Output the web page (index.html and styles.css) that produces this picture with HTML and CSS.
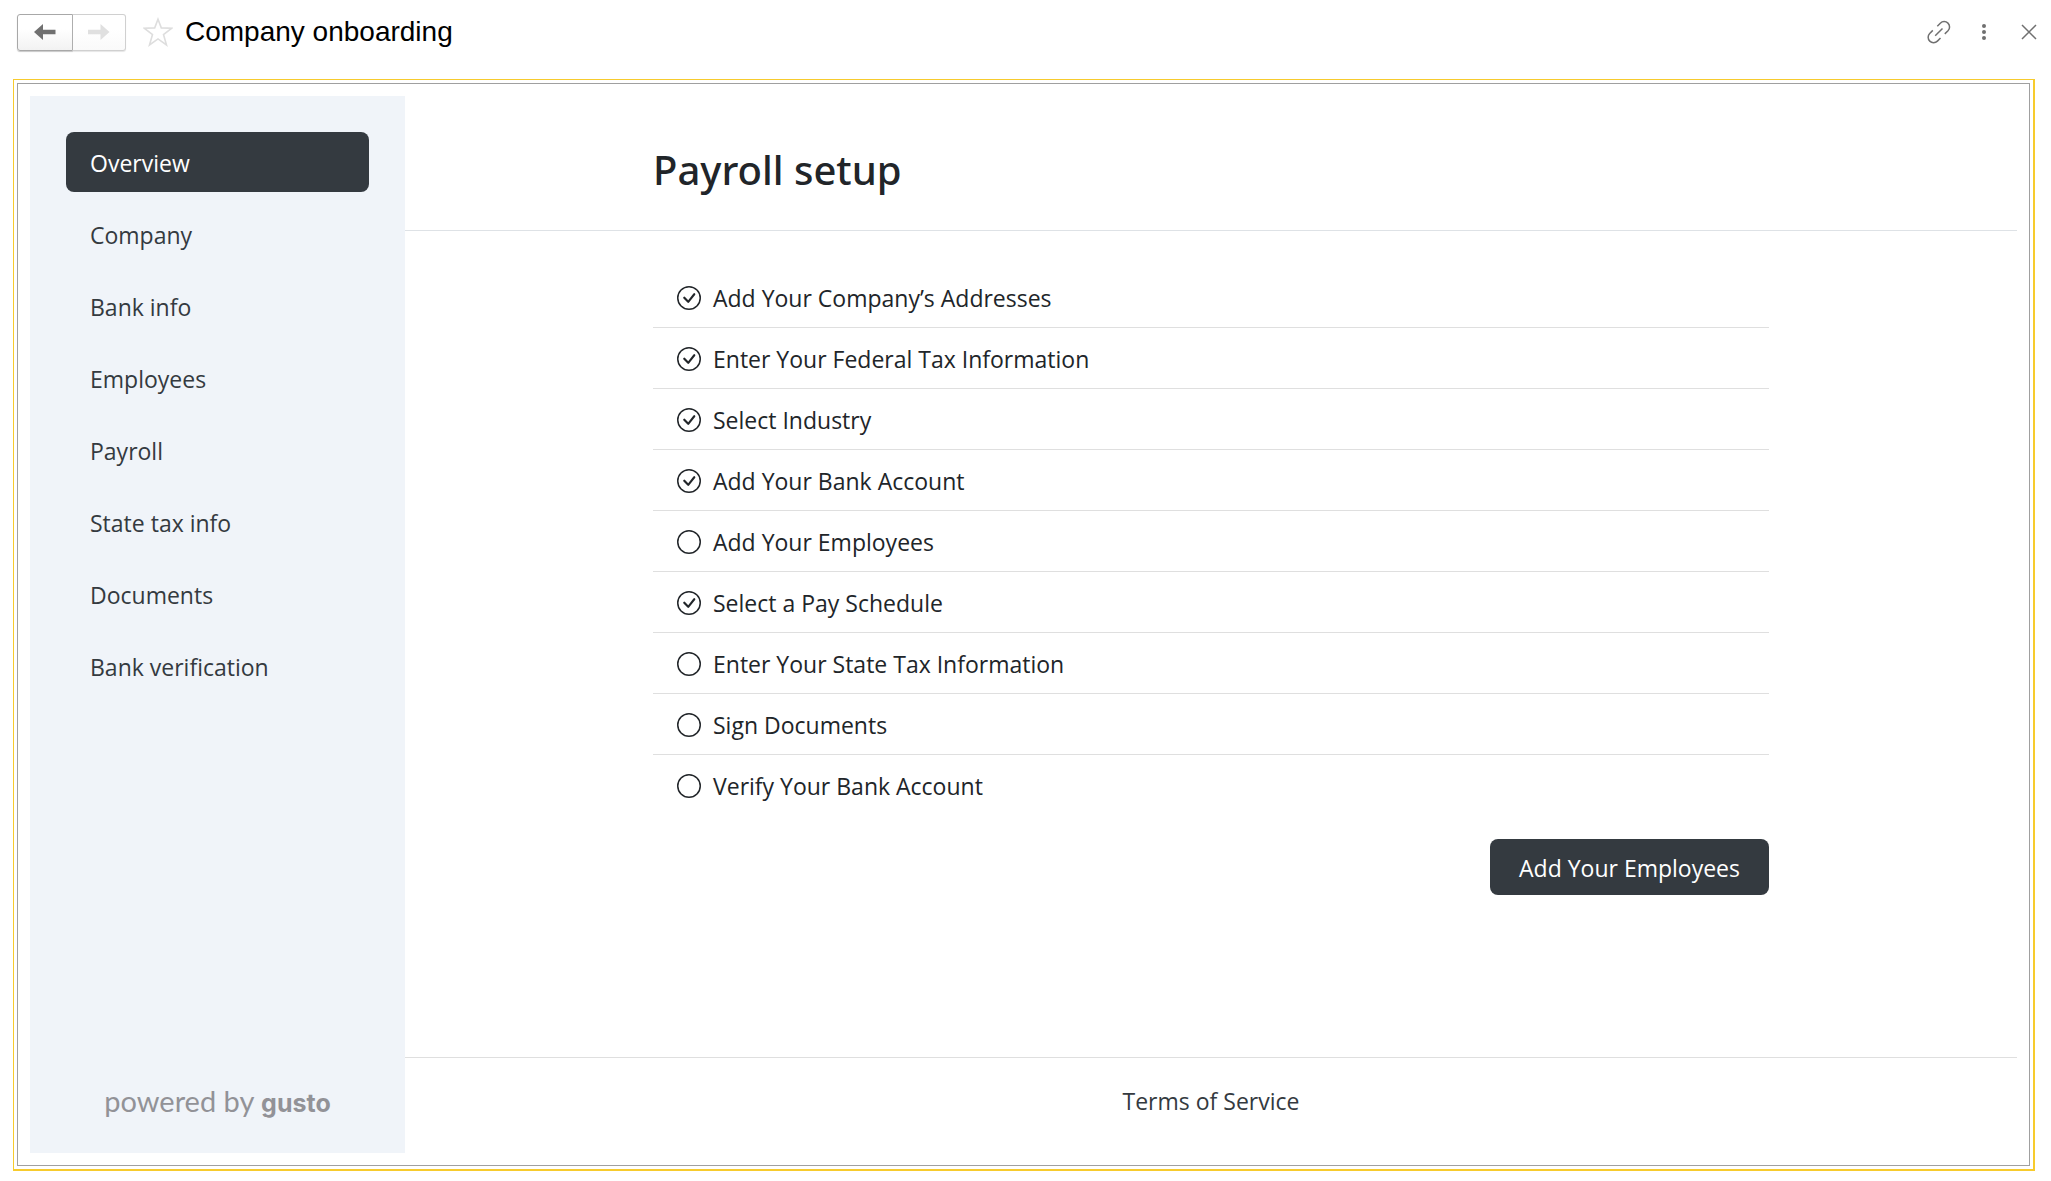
FILE: index.html
```html
<!DOCTYPE html>
<html lang="en">
  <head>
    <meta charset="UTF-8" />
    <meta name="viewport" content="width=device-width, initial-scale=1.0" />
    <title>Company onboarding</title>
    <link rel="stylesheet" href="styles.css">
  </head>
  <body>
    <header class="title-bar">
      <div class="history">
        <button type="button" class="history-button" aria-label="Back">
          <svg width="22" height="16" viewBox="0 0 22 16"><path d="M0 8 9 0v5.7h12.5v4.6H9V16z" fill="currentColor" /></svg>
        </button>
        <button type="button" class="history-button forward" aria-label="Forward" disabled>
          <svg width="22" height="16" viewBox="0 0 22 16"><path d="M21.5 8l-9-8v5.7H0v4.6h12.5V16z" fill="currentColor" /></svg>
        </button>
      </div>
      <button type="button" class="icon-button star" aria-label="Add to favorites">
        <svg width="30" height="30" viewBox="0 0 30 30"><path d="M15 2.2l3.3 8.7 10.2.4-8 6.2 3 10.5L15 21.9 6.500 28l3-10.500-8-6.200 10.200-.4z" fill="none" stroke="currentColor" stroke-width="1.600" /></svg>
      </button>
      <h1 class="window-title">Company onboarding</h1>
      <div class="window-actions">
        <button type="button" class="icon-button" aria-label="Get link">
          <svg width="24" height="24" viewBox="0 0 24 24" fill="none" stroke="currentColor" stroke-width="1.500"><path d="M10.300 6.200l3-3a5.400 5.400 0 0 1 7.700 7.600l-3.200 3.100M5.800 10.400l-3.100 3.100a5.400 5.400 0 0 0 7.700 7.600l3.100-3.100M8.200 15.800l7.300-7.300" /></svg>
        </button>
        <button type="button" class="icon-button" aria-label="More actions">
          <svg width="24" height="24" viewBox="0 0 24 24" fill="currentColor"><circle cx="12" cy="6" r="2" /><circle cx="12" cy="12" r="2" /><circle cx="12" cy="18" r="2" /></svg>
        </button>
        <button type="button" class="icon-button" aria-label="Close">
          <svg width="24" height="24" viewBox="0 0 24 24" fill="none" stroke="currentColor" stroke-width="1.500"><path d="M5 5l14 14M19 5 5 19" /></svg>
        </button>
      </div>
    </header>

    <div class="frame">
      <div class="document">
        <aside class="sidebar">
          <nav class="nav">
            <a href="#" class="nav-link active" aria-current="page">Overview</a>
            <a href="#" class="nav-link">Company</a>
            <a href="#" class="nav-link">Bank info</a>
            <a href="#" class="nav-link">Employees</a>
            <a href="#" class="nav-link">Payroll</a>
            <a href="#" class="nav-link">State tax info</a>
            <a href="#" class="nav-link">Documents</a>
            <a href="#" class="nav-link">Bank verification</a>
          </nav>
          <p class="powered-by">powered by <strong class="brand">gusto</strong></p>
        </aside>

        <main class="content">
          <div class="content-header">
            <h2 class="container">Payroll setup</h2>
          </div>

          <div class="container steps-section">
            <ul class="steps">
              <li class="step"><svg class="step-icon" viewBox="0 0 16 16"><use href="#check" /></svg>Add Your Company’s Addresses</li>
              <li class="step"><svg class="step-icon" viewBox="0 0 16 16"><use href="#check" /></svg>Enter Your Federal Tax Information</li>
              <li class="step"><svg class="step-icon" viewBox="0 0 16 16"><use href="#check" /></svg>Select Industry</li>
              <li class="step"><svg class="step-icon" viewBox="0 0 16 16"><use href="#check" /></svg>Add Your Bank Account</li>
              <li class="step"><svg class="step-icon" viewBox="0 0 16 16"><use href="#circle" /></svg>Add Your Employees</li>
              <li class="step"><svg class="step-icon" viewBox="0 0 16 16"><use href="#check" /></svg>Select a Pay Schedule</li>
              <li class="step"><svg class="step-icon" viewBox="0 0 16 16"><use href="#circle" /></svg>Enter Your State Tax Information</li>
              <li class="step"><svg class="step-icon" viewBox="0 0 16 16"><use href="#circle" /></svg>Sign Documents</li>
              <li class="step"><svg class="step-icon" viewBox="0 0 16 16"><use href="#circle" /></svg>Verify Your Bank Account</li>
            </ul>
            <button type="button" class="primary-button">Add Your Employees</button>
          </div>

          <footer class="content-footer">
            <a href="#">Terms of Service</a>
          </footer>
        </main>
      </div>
    </div>

    <!-- Shared step icons -->
    <svg class="sprite" aria-hidden="true">
      <symbol id="circle" viewBox="0 0 16 16">
        <circle cx="8" cy="8" r="7.500" fill="none" stroke="currentColor" />
      </symbol>
      <symbol id="check" viewBox="0 0 16 16">
        <circle cx="8" cy="8" r="7.500" fill="none" stroke="currentColor" />
        <path d="M10.970 4.970a.235.235 0 0 0-.02.022L7.477 9.417 5.384 7.323a.75.75 0 0 0-1.060 1.060L6.970 11.030a.75.75 0 0 0 1.079-.02l3.992-4.990a.75.75 0 0 0-1.071-1.050z" fill="currentColor" />
      </symbol>
    </svg>
  </body>
</html>
```
FILE: styles.css
```css
* {
  margin: 0;
  padding: 0;
  box-sizing: border-box;
}

body {
  font-family: "Segoe UI", "Open Sans", "Noto Sans", sans-serif;
  font-size: 23px;
  line-height: 36px;
  color: #212529;
  background: white;
  min-height: 100vh;
  padding: 0 16px 10px 13px;
  display: flex;
  flex-direction: column;
}

button {
  font: inherit;
  cursor: pointer;
}

svg {
  display: block;
}

.title-bar {
  display: flex;
  align-items: center;
  height: 79px;
  padding: 0 0 15px 4px;
}

.history {
  display: flex;
}

.history-button {
  width: 56px;
  height: 37px;
  display: flex;
  align-items: center;
  justify-content: center;
  color: #707070;
  background: linear-gradient(white 40%, #f2f2f2);
  border: 1px solid #a8a8a8;
  border-radius: 3px 0 0 3px;
  box-shadow: 0 1px 1px #c8c8c8;
}

.history-button.forward {
  width: 53px;
  color: #e0e0e0;
  background: linear-gradient(white 40%, #fafafa);
  border-color: #d0d0d0;
  border-left: none;
  border-radius: 0 3px 3px 0;
  box-shadow: 0 1px 1px #e6e6e6;
}

.icon-button {
  color: #707070;
  background: none;
  border: none;
}

.star {
  color: #dedede;
  margin-left: 17px;
}

.window-title {
  flex: 1;
  margin-left: 12px;
  font-family: Arial, "Liberation Sans", sans-serif;
  font-size: 28px;
  font-weight: 400;
  color: black;
}

.window-actions {
  display: flex;
  gap: 21px;
  margin-right: -6px;
}

.frame {
  flex: 1;
  display: flex;
  padding: 3px;
  border: 1px solid #f7cb2d;
  border-width: 1px 2px 2px 1px;
}

.document {
  flex: 1;
  display: flex;
  padding: 12px;
  border: 1px solid #a0a0a0;
}

.sidebar {
  width: 375px;
  flex-shrink: 0;
  padding: 36px 36px 34px;
  background: #f0f4f9;
  display: flex;
  flex-direction: column;
  justify-content: space-between;
}

.nav {
  display: flex;
  flex-direction: column;
  gap: 12px;
}

.nav-link {
  padding: 13px 24px 11px;
  border-radius: 8px;
  color: #343a40;
  text-decoration: none;
}

.nav-link.active {
  background: #343a40;
  color: white;
}

.powered-by {
  font-family: Lato, sans-serif;
  font-size: 29px;
  line-height: 32px;
  text-align: center;
  color: #929297;
}

.brand {
  font-family: Inter, sans-serif;
  font-size: 25px;
  font-weight: 700;
}

.content {
  flex: 1;
  display: flex;
  flex-direction: column;
}

.container {
  width: 100%;
  max-width: 1116px;
  margin: 0 auto;
}

.content-header {
  padding: 49px 0 35px;
  border-bottom: 1px solid #dee2e6;
}

.content-header h2 {
  font-family: "Segoe UI", "Noto Sans", sans-serif;
  font-size: 40px;
  font-weight: 500;
  line-height: 50px;
}

.steps-section {
  flex: 1;
  padding-top: 36px;
  display: flex;
  flex-direction: column;
  align-items: flex-end;
  gap: 24px;
}

.steps {
  width: 100%;
  list-style: none;
}

.step {
  display: flex;
  align-items: center;
  gap: 12px;
  padding: 13px 24px 11px;
}

.step + .step {
  border-top: 1px solid #dfdfdf;
}

.step-icon {
  width: 24px;
  height: 24px;
}

.primary-button {
  padding: 11px 29px 9px;
  color: white;
  background: #343a40;
  border: none;
  border-radius: 8px;
}

.content-footer {
  padding: 25px 0 34px;
  border-top: 1px solid #dfdfdf;
  text-align: center;
}

.content-footer a {
  color: #343a40;
  text-decoration: none;
}

.sprite {
  position: absolute;
  width: 0;
  height: 0;
}
```
